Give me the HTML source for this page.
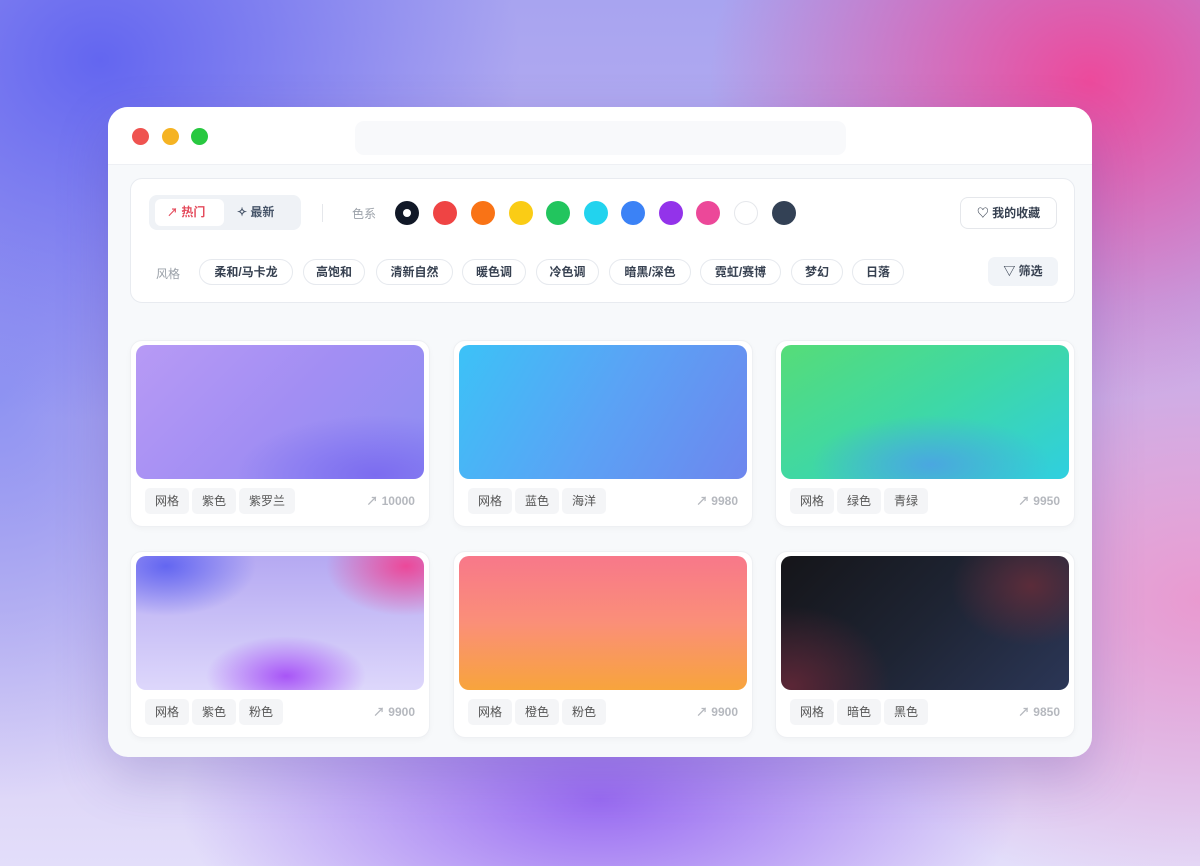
<!DOCTYPE html>
<html><head><meta charset="utf-8"><style>
*{box-sizing:border-box;margin:0;padding:0}
body{width:1200px;height:866px;overflow:hidden;font-family:"Liberation Sans","Noto Sans CJK SC",sans-serif;position:relative;
background:
radial-gradient(ellipse 420px 360px at 100px 60px,#6366f0 0%,rgba(99,102,240,0) 100%),
radial-gradient(ellipse 300px 400px at 0px 400px,#8f94f2 0%,rgba(143,148,242,0) 100%),
radial-gradient(ellipse 380px 320px at 1090px 80px,#ec4a9c 0%,rgba(236,74,156,0) 100%),
radial-gradient(ellipse 420px 200px at 600px 800px,#9a6cf2 0%,rgba(154,108,242,0) 100%),
radial-gradient(ellipse 400px 300px at 1200px 600px,#e99ad0 0%,rgba(233,154,208,0) 100%),
linear-gradient(180deg,#a8a4f0 0%,#c7b6ee 50%,#e3defa 100%);}
.win{position:absolute;left:108px;top:107px;width:984px;height:650px;border-radius:20px;background:#f7f9fb;overflow:hidden;box-shadow:0 20px 50px rgba(80,60,160,.25)}
.tb{height:58px;background:#fff;border-bottom:1px solid #eef0f4;position:relative}
.dot{position:absolute;top:21px;width:17px;height:17px;border-radius:50%}
.addr{position:absolute;left:247px;top:14px;width:491px;height:34px;border-radius:9px;background:#f8f9fb}
.panel{position:absolute;left:22px;top:71px;width:945px;height:125px;background:#fff;border:1px solid #e8ebf0;border-radius:12px}
.abs{position:absolute}
.seg{left:18px;top:16px;width:152px;height:35px;background:#eff2f6;border-radius:8px}
.segon{left:6px;top:4px;width:69px;height:27px;background:#fff;border-radius:6px;color:#e44b5c;font-size:12px;font-weight:bold;line-height:27px;padding-left:12px}
.c{position:absolute;top:22px;width:24px;height:24px;border-radius:50%}
.chip{position:absolute;top:80px;height:26px;border:1px solid #e6e9ee;border-radius:13px;font-size:12px;color:#374151;font-weight:bold;text-align:center;line-height:24px}
.card{position:absolute;width:300px;height:187px;background:#fff;border-radius:12px;border:1px solid #eef0f3;box-shadow:0 2px 6px rgba(0,0,0,.03)}
.img{position:absolute;left:5px;top:4px;width:288px;height:134px;border-radius:10px}
.tag{position:absolute;top:147px;height:26px;background:#f4f5f7;border-radius:5px;font-size:12px;color:#555;line-height:26px;padding:0 10px}
.cnt{position:absolute;right:14px;top:147px;line-height:26px;font-size:12px;color:#b5b8be;font-weight:bold}
</style></head><body>
<div class="win">
<div class="tb">
<div class="dot" style="left:24px;background:#ef5350"></div>
<div class="dot" style="left:54px;background:#f5b323"></div>
<div class="dot" style="left:83px;background:#28c840"></div>
<div class="addr"></div>
</div>
<div class="panel">
<div class="abs seg"><div class="abs segon"><span style="font-size:11px">↗</span> 热门</div>
<div class="abs" style="left:88px;top:4px;line-height:27px;font-size:12px;color:#475569;font-weight:bold">✧ 最新</div></div>
<div class="abs" style="left:191px;top:25px;width:1px;height:18px;background:#e5e7eb"></div>
<div class="abs" style="left:221px;top:26px;font-size:12px;color:#9aa0a8">色系</div>
<div class="c" style="left:264px;background:#111827"><div style="position:absolute;left:8px;top:8px;width:8px;height:8px;border-radius:50%;background:#fff"></div></div>
<div class="c" style="left:302px;background:#ef4444"></div>
<div class="c" style="left:340px;background:#f97316"></div>
<div class="c" style="left:378px;background:#facc15"></div>
<div class="c" style="left:415px;background:#22c55e"></div>
<div class="c" style="left:453px;background:#22d3ee"></div>
<div class="c" style="left:490px;background:#3b82f6"></div>
<div class="c" style="left:528px;background:#9333ea"></div>
<div class="c" style="left:565px;background:#ec4899"></div>
<div class="c" style="left:603px;background:#fff;border:1px solid #e5e7eb"></div>
<div class="c" style="left:641px;background:#334155"></div>
<div class="abs" style="left:829px;top:18px;width:97px;height:32px;border:1px solid #e5e7eb;border-radius:8px;font-size:12px;color:#374151;font-weight:bold;line-height:30px;text-align:center">♡ 我的收藏</div>
<div class="abs" style="left:25px;top:86px;font-size:12px;color:#9aa0a8">风格</div>
<div class="chip" style="left:68px;width:94px">柔和/马卡龙</div>
<div class="chip" style="left:172px;width:62px">高饱和</div>
<div class="chip" style="left:245px;width:77px">清新自然</div>
<div class="chip" style="left:331px;width:64px">暖色调</div>
<div class="chip" style="left:405px;width:63px">冷色调</div>
<div class="chip" style="left:478px;width:82px">暗黑/深色</div>
<div class="chip" style="left:569px;width:81px">霓虹/赛博</div>
<div class="chip" style="left:660px;width:52px">梦幻</div>
<div class="chip" style="left:721px;width:52px">日落</div>
<div class="abs" style="left:857px;top:78px;width:70px;height:29px;background:#f1f4f8;border-radius:7px;font-size:12px;color:#374151;font-weight:bold;line-height:29px;text-align:center">▽ 筛选</div>
</div>

<div class="card" style="left:22px;top:233px"><div class="img" style="background:radial-gradient(ellipse 140px 60px at 240px 130px,#7c6cf0,rgba(124,108,240,0)),linear-gradient(135deg,#b79af5,#a28ef3 50%,#8d8ef2)"></div>
<div class="tag" style="left:14px">网格</div><div class="tag" style="left:61px">紫色</div><div class="tag" style="left:108px">紫罗兰</div><div class="cnt">↗ 10000</div></div>
<div class="card" style="left:345px;top:233px"><div class="img" style="background:linear-gradient(120deg,#3cc2f7,#5aa3f5 50%,#6e86ee)"></div>
<div class="tag" style="left:14px">网格</div><div class="tag" style="left:61px">蓝色</div><div class="tag" style="left:108px">海洋</div><div class="cnt">↗ 9980</div></div>
<div class="card" style="left:667px;top:233px"><div class="img" style="background:radial-gradient(ellipse 120px 50px at 150px 120px,#4aa7e0,rgba(74,167,224,0)),linear-gradient(150deg,#56dc78,#3ed8a6 50%,#2fcfe0)"></div>
<div class="tag" style="left:14px">网格</div><div class="tag" style="left:61px">绿色</div><div class="tag" style="left:108px">青绿</div><div class="cnt">↗ 9950</div></div>

<div class="card" style="left:22px;top:444px"><div class="img" style="background:radial-gradient(ellipse 80px 50px at 270px 10px,#ec4899,rgba(236,72,153,0)),radial-gradient(ellipse 90px 50px at 30px 10px,#6366f1,rgba(99,102,241,0)),radial-gradient(ellipse 80px 40px at 150px 120px,#a855f7,rgba(168,85,247,0)),linear-gradient(180deg,#b5a9f2,#ddd7fb)"></div>
<div class="tag" style="left:14px">网格</div><div class="tag" style="left:61px">紫色</div><div class="tag" style="left:108px">粉色</div><div class="cnt">↗ 9900</div></div>
<div class="card" style="left:345px;top:444px"><div class="img" style="background:linear-gradient(180deg,#f8788a,#fa8f78 50%,#f8a43c)"></div>
<div class="tag" style="left:14px">网格</div><div class="tag" style="left:61px">橙色</div><div class="tag" style="left:108px">粉色</div><div class="cnt">↗ 9900</div></div>
<div class="card" style="left:667px;top:444px"><div class="img" style="background:radial-gradient(ellipse 100px 80px at 10px 130px,#5b2636,rgba(91,38,54,0)),radial-gradient(ellipse 80px 60px at 250px 30px,#5b2c3a,rgba(91,44,58,0)),linear-gradient(135deg,#151519,#1e2433 50%,#2b3656)"></div>
<div class="tag" style="left:14px">网格</div><div class="tag" style="left:61px">暗色</div><div class="tag" style="left:108px">黑色</div><div class="cnt">↗ 9850</div></div>
</div>
</body></html>
